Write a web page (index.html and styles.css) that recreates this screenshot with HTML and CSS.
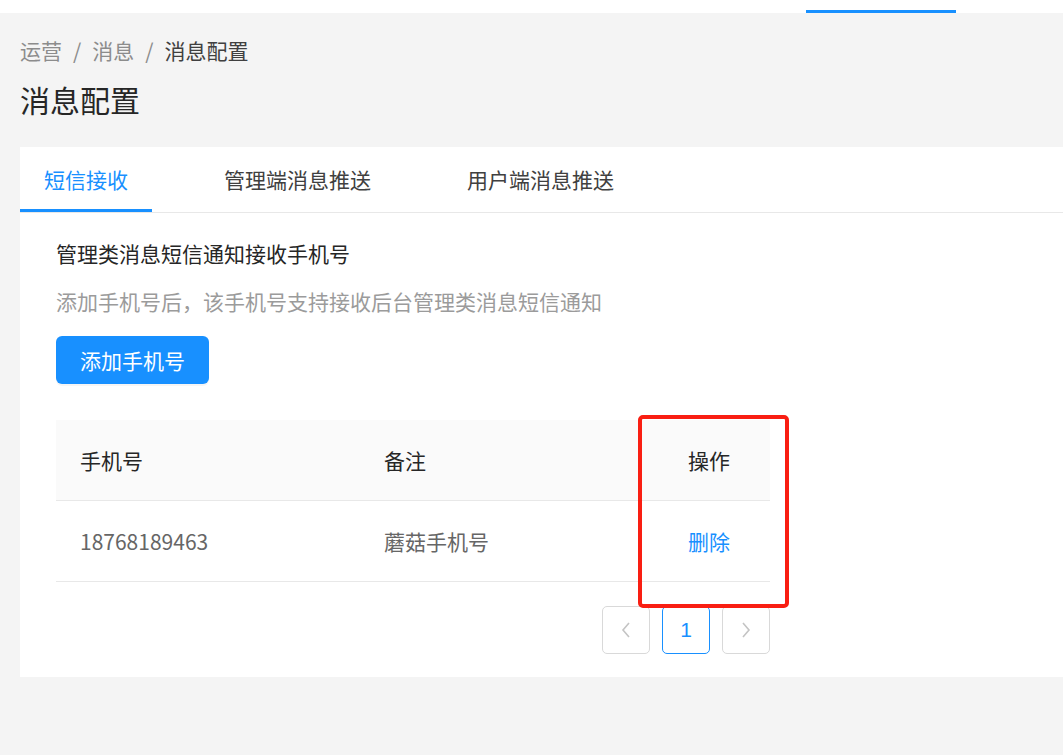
FILE: index.html
```html
<!DOCTYPE html>
<html lang="zh-CN">
<head>
    <meta charset="UTF-8">
    <meta name="viewport" content="width=device-width, initial-scale=1.0">
    <title>消息配置</title>
    <link rel="stylesheet" href="styles.css">
</head>
<body>

<header class="topbar">
    <div class="topbar-item active"></div>
</header>

<div class="page">
    <div class="breadcrumb">
        <span class="crumb">运营</span>
        <span class="sep">/</span>
        <span class="crumb">消息</span>
        <span class="sep">/</span>
        <span class="crumb current">消息配置</span>
    </div>
    <h1 class="page-title">消息配置</h1>

    <div class="card">
        <div class="tabs">
            <div class="tab active">短信接收</div>
            <div class="tab">管理端消息推送</div>
            <div class="tab">用户端消息推送</div>
        </div>

        <div class="pane">
            <h3 class="pane-title">管理类消息短信通知接收手机号</h3>
            <p class="pane-desc">添加手机号后，该手机号支持接收后台管理类消息短信通知</p>
            <button class="btn-primary">添加手机号</button>

            <div class="table-wrap">
                <table class="phone-table">
                    <thead>
                        <tr>
                            <th class="col-phone">手机号</th>
                            <th class="col-note">备注</th>
                            <th class="col-action">操作</th>
                        </tr>
                    </thead>
                    <tbody>
                        <tr>
                            <td>18768189463</td>
                            <td>蘑菇手机号</td>
                            <td class="col-action"><a class="link" href="#">删除</a></td>
                        </tr>
                    </tbody>
                </table>
                <div class="mark"></div>
            </div>

            <div class="pagination">
                <span class="page-btn disabled">
                    <svg width="12" height="18" viewBox="0 0 12 18"><path d="M9 2 L3 9 L9 16" fill="none" stroke="#c4c4c4" stroke-width="1.6"/></svg>
                </span>
                <span class="page-btn current">1</span>
                <span class="page-btn disabled">
                    <svg width="12" height="18" viewBox="0 0 12 18"><path d="M3 2 L9 9 L3 16" fill="none" stroke="#c4c4c4" stroke-width="1.6"/></svg>
                </span>
            </div>
        </div>
    </div>
</div>

</body>
</html>
```

FILE: styles.css
```css
body {
    margin: 0;
    background-color: #f4f4f4;
    font-family: "Noto Sans CJK SC", "Microsoft YaHei", sans-serif;
    font-size: 21px;
    color: #333;
}
.topbar {
    height: 13px;
    background-color: #fff;
    display: flex;
    justify-content: flex-end;
    padding-right: 107px;
}
.topbar-item {
    width: 150px;
    height: 10px;
    border-bottom: 3px solid transparent;
}
.topbar-item.active {
    border-bottom-color: #1890ff;
}
.page {
    padding: 22px 0 0 20px;
}
.breadcrumb {
    line-height: 30px;
    display: flex;
}
.breadcrumb .crumb {
    color: #8c8c8c;
}
.breadcrumb .crumb.current {
    color: #404040;
}
.breadcrumb .sep {
    color: #8c8c8c;
    padding: 0 11px;
}
.page-title {
    margin: 14px 0 0;
    font-size: 30px;
    font-weight: normal;
    line-height: 40px;
    color: #262626;
}
.card {
    margin-top: 28px;
    background-color: #fff;
    padding-bottom: 23px;
}
.tabs {
    display: flex;
    border-bottom: 1px solid #e8e8e8;
}
.tab {
    padding: 17px 24px 0;
    height: 45px;
    line-height: 30px;
    margin-right: 48px;
    color: #404040;
    border-bottom: 3px solid transparent;
}
.tab.active {
    color: #1890ff;
    border-bottom-color: #1890ff;
}
.pane {
    padding: 25px 36px 0;
}
.pane-title {
    margin: 0;
    font-size: 21px;
    font-weight: normal;
    line-height: 30px;
    color: #262626;
}
.pane-desc {
    margin: 18px 0 0;
    line-height: 30px;
    color: #9b9b9b;
}
.btn-primary {
    margin-top: 20px;
    height: 48px;
    padding: 0 24px;
    border: none;
    border-radius: 6px;
    background-color: #1890ff;
    color: #fff;
    font-family: inherit;
    font-size: 21px;
    box-shadow: 0 2px 0 rgba(0, 0, 0, 0.04);
}
.table-wrap {
    position: relative;
    margin-top: 36px;
    width: 714px;
}
.phone-table {
    width: 100%;
    border-collapse: collapse;
    table-layout: fixed;
}
.phone-table th,
.phone-table td {
    height: 80px;
    padding: 0 24px;
    text-align: left;
    font-weight: normal;
    border-bottom: 1px solid #e8e8e8;
}
.phone-table th {
    background-color: #fafafa;
    color: #262626;
}
.phone-table td {
    color: #666;
}
.phone-table .col-phone {
    width: 256px;
}
.phone-table .col-note {
    width: 240px;
}
.phone-table .col-action {
    text-align: center;
    padding: 0;
}
.link {
    color: #1890ff;
    text-decoration: none;
}
/* 标注框 */
.mark {
    position: absolute;
    left: 582px;
    top: -5px;
    width: 143px;
    height: 185px;
    border: 4px solid #f91e12;
    border-radius: 5px;
}
.pagination {
    display: flex;
    justify-content: flex-end;
    gap: 12px;
    width: 714px;
    margin-top: 24px;
}
.page-btn {
    width: 46px;
    height: 46px;
    border: 1px solid #d9d9d9;
    border-radius: 5px;
    display: flex;
    align-items: center;
    justify-content: center;
    color: #1890ff;
    font-family: "Liberation Sans", Arial, sans-serif;
    font-size: 21px;
}
.page-btn.current {
    border-color: #1890ff;
}
```
